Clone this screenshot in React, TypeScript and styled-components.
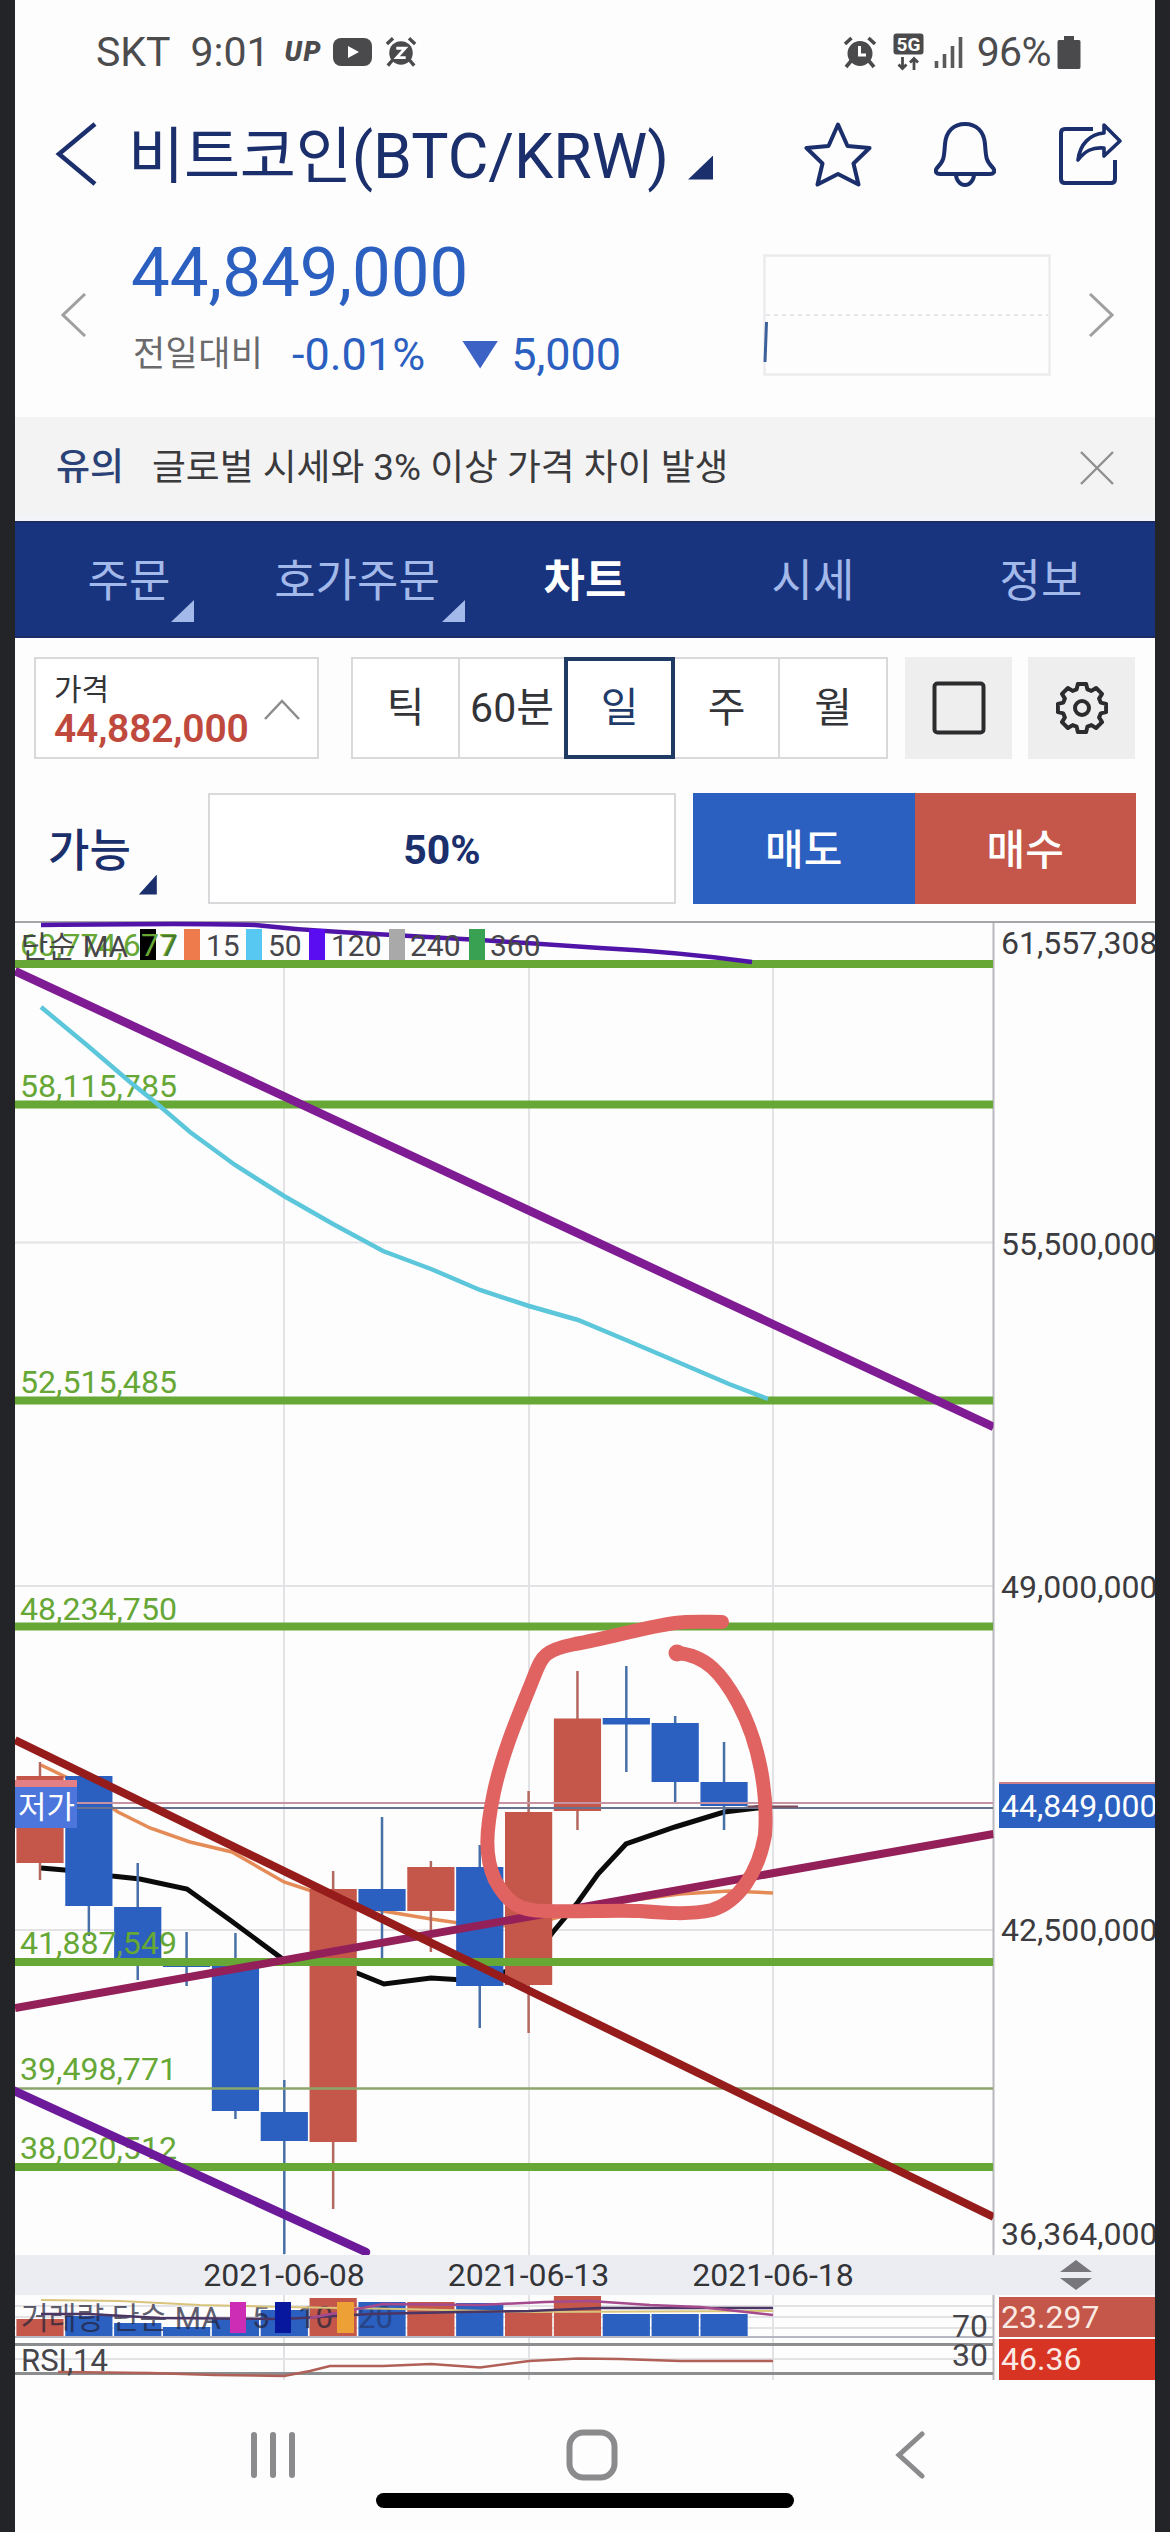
import React from "react";
import styled, { createGlobalStyle, css } from "styled-components";

const SANS = `Roboto, "Noto Sans CJK KR", sans-serif`;

const color = {
  navy: "#1a2f6b",
  nav: "#18347f",
  blue: "#2b5fc0",
  red: "#c4574a",
  ink: "#333438",
  green: "#66a736",
  line: "#d9d9dc",
};

const GlobalStyle = createGlobalStyle`
  * { box-sizing: border-box; }
  html, body { margin: 0; padding: 0; background: #222428; }
  body { font-family: ${SANS}; }
  button { font: inherit; border: 0; background: none; padding: 0; margin: 0; color: inherit; }
`;

const Screen = styled.main`
  display: flex;
  flex-direction: column;
  width: 1140px;
  height: 2532px;
  margin: 0 15px;
  background: #fdfdfd;
  overflow: hidden;
`;

const StatusBar = styled.div`
  display: flex;
  align-items: center;
  justify-content: space-between;
  height: 104px;
  padding: 0 74px 0 81px;
  color: #4c4c4e;
  font-size: 41px;
  line-height: 1;
  svg { display: block; }
`;
const StatusSide = styled.div`
  display: flex;
  align-items: center;
`;
const StatusText = styled.span<{ $gap?: number; $ls?: number }>`
  margin-right: ${(p) => p.$gap ?? 0}px;
  letter-spacing: ${(p) => p.$ls ?? 0}px;
`;
const UpMark = styled.span`
  margin-right: 11px;
  font-size: 27px;
  font-weight: 900;
  font-style: italic;
  letter-spacing: 1.5px;
`;
const Spacer = styled.i<{ $w: number }>`
  flex: none;
  width: ${(p) => p.$w}px;
`;

const TitleBar = styled.header`
  display: flex;
  align-items: center;
  height: 100px;
  padding: 0 32px 0 40px;
  color: ${color.navy};
`;
const Title = styled.h1`
  flex: 1;
  display: flex;
  align-items: flex-end;
  gap: 19px;
  margin: 5px 0 0 30px;
  font-size: 62.5px;
  font-weight: 400;
  line-height: 76px;
  white-space: nowrap;
`;
const Hangul = styled.span<{ $size: number; $ls?: number }>`
  font-size: ${(p) => p.$size}px;
  letter-spacing: ${(p) => p.$ls ?? 0}px;
`;
const Corner = styled.i<{ $w: number; $h: number; $c: string }>`
  display: block;
  flex: none;
  width: ${(p) => p.$w}px;
  height: ${(p) => p.$h}px;
  background: ${(p) => p.$c};
  clip-path: polygon(100% 0, 100% 100%, 0 100%);
`;
const TitleCorner = styled(Corner)`
  margin-bottom: 15px;
`;
const HeaderIcons = styled.div`
  display: flex;
  align-items: center;
  gap: 62px;
  svg { display: block; }
`;

const Quote = styled.section`
  display: flex;
  align-items: center;
  height: 213px;
  padding: 9px 41px 0 46px;
  svg { display: block; flex: none; }
`;
const QuoteBody = styled.div`
  flex: 1;
  margin: 0 0 15px 44px;
  color: ${color.blue};
`;
const QuotePrice = styled.div`
  font-size: 69px;
  line-height: 84px;
  letter-spacing: 0;
`;
const QuoteRow = styled.div`
  display: flex;
  align-items: center;
  height: 60px;
  margin-top: 10px;
  font-size: 45px;
  line-height: 60px;
`;
const QuoteLabel = styled.span`
  width: 161px;
  padding-left: 2px;
  color: #6a6a6c;
  font-size: 35px;
  letter-spacing: 0.4px;
`;
const DownMark = styled.i`
  width: 36px;
  height: 28px;
  margin: 0 13px 0 37px;
  background: #3c62c6;
  clip-path: polygon(0 0, 100% 0, 50% 100%);
`;

const Notice = styled.section`
  display: flex;
  align-items: center;
  height: 104px;
  padding: 4px 41px 0 41px;
  background: #f3f3f4;
  border-bottom: 6px solid #f3f3fa;
  color: #3a3a3c;
  font-size: 36.8px;
  line-height: 50px;
  white-space: nowrap;
  svg { margin-left: auto; }
`;
const NoticeTag = styled.b`
  width: 96px;
  color: #2b4276;
  font-weight: 500;
  font-size: 37px;
`;

const Tabs = styled.nav`
  display: grid;
  grid-template-columns: repeat(5, 1fr);
  height: 117px;
  background: ${color.nav};
  border-top: 2px solid #1b2c66;
  border-bottom: 2px solid #1b2c66;
`;
const Tab = styled.button<{ $on?: boolean }>`
  position: relative;
  padding-top: 4px;
  color: #a3b9ea;
  font-size: 45px;
  line-height: 109px;
  ${(p) => p.$on && css`color: #fff; font-weight: 700;`}
`;
const TabCorner = styled.span<{ $right: number }>`
  position: absolute;
  right: ${(p) => p.$right}px;
  bottom: 14px;
`;

const ToolRow = styled.section`
  display: flex;
  height: 102px;
  margin: 19px 19px 0;
`;
const PriceBox = styled.div`
  display: flex;
  align-items: center;
  justify-content: space-between;
  width: 285px;
  padding: 2px 17px 0 18px;
  border: 2px solid ${color.line};
  background: #fff;
`;
const PriceBoxText = styled.div`
  display: flex;
  flex-direction: column;
  color: ${color.ink};
  font-size: 30px;
  line-height: 40px;
  b {
    color: #c0493d;
    font-size: 39px;
    font-weight: 600;
    letter-spacing: -0.2px;
    line-height: 39px;
  }
`;
const Periods = styled.div`
  display: grid;
  grid-template-columns: 105px 106px 111px 103px 108px;
  width: 537px;
  margin: 0 17px 0 32px;
  border: 2px solid ${color.line};
  background: #fff;
`;
const Period = styled.button<{ $on?: boolean; $first?: boolean }>`
  color: ${color.ink};
  font-size: 41px;
  line-height: 98px;
  white-space: nowrap;
  border-left: ${(p) => (p.$first ? 0 : 2)}px solid ${color.line};
  ${(p) => p.$on && css`
    margin: -2px 0;
    border: 4px solid #1f3b63;
    color: #1f3b6b;
    line-height: 94px;
  `}
`;
const IconButton = styled.button`
  display: flex;
  align-items: center;
  justify-content: center;
  width: 107px;
  background: #eeeeef;
  & + & { margin-left: 16px; }
`;

const OrderRow = styled.section`
  display: flex;
  height: 111px;
  margin: 34px 19px 17px;
`;
const Available = styled.div`
  display: flex;
  align-items: center;
  width: 174px;
  padding: 6px 0 0 14px;
  color: ${color.navy};
  font-size: 45px;
  font-weight: 500;
  line-height: 60px;
  white-space: nowrap;
  i { margin: 66px 0 0 8px; }
`;
const PercentBox = styled.div`
  width: 468px;
  border: 2px solid ${color.line};
  background: #fff;
  color: ${color.navy};
  font-size: 41px;
  font-weight: 700;
  line-height: 111px;
  text-align: center;
`;
const TradeButton = styled.button<{ $sell?: boolean }>`
  flex: 1;
  margin-left: ${(p) => (p.$sell ? 17 : 0)}px;
  padding-top: 5px;
  background: ${(p) => (p.$sell ? color.blue : color.red)};
  color: #fff;
  font-size: 42px;
  font-weight: 500;
  line-height: 106px;
`;

const ChartSvg = styled.svg`
  display: block;
  flex: none;
  font-family: ${SANS};
  font-size: 32px;
`;

const DateStrip = styled.div`
  display: grid;
  grid-template-columns: 147px 244px 245px 244px 1fr;
  align-items: center;
  flex: none;
  height: 40px;
  background: #ecedf2;
  color: ${color.ink};
  font-size: 32px;
  line-height: 40px;
  text-align: center;
  svg { justify-self: center; margin-left: 101px; }
`;

const SystemNav = styled.footer`
  display: flex;
  align-items: center;
  justify-content: space-between;
  height: 110px;
  margin-top: 20px;
  padding: 0 230px 0 235px;
  flex: none;
`;
const HomeIcon = styled.svg`
  margin-right: 7px;
`;
const HomeBar = styled.div`
  align-self: center;
  width: 418px;
  height: 15px;
  margin-top: -17px;
  flex: none;
  border-radius: 8px;
  background: #000;
`;

type CandleData = { o: number; c: number; h: number; l: number; up?: boolean; v: number };

const candles: CandleData[] = [
  { o: 1776, c: 1863, h: 1762, l: 1880, up: true, v: 2319 },
  { o: 1776, c: 1906, h: 1776, l: 1936, v: 2316 },
  { o: 1907, c: 1958, h: 1863, l: 1980, v: 2323 },
  { o: 1962, c: 1967, h: 1932, l: 1986, v: 2327 },
  { o: 1962, c: 2111, h: 1933, l: 2119, v: 2318 },
  { o: 2112, c: 2141, h: 2080, l: 2254, v: 2310 },
  { o: 1889, c: 2142, h: 1871, l: 2209, up: true, v: 2298 },
  { o: 1889, c: 1911, h: 1817, l: 1960, v: 2302 },
  { o: 1867, c: 1911, h: 1861, l: 1952, up: true, v: 2302 },
  { o: 1867, c: 1986, h: 1845, l: 2028, v: 2303 },
  { o: 1812, c: 1985, h: 1791, l: 2033, up: true, v: 2310 },
  { o: 1718.5, c: 1811, h: 1671, l: 1830, up: true, v: 2296 },
  { o: 1718, c: 1724.5, h: 1666, l: 1772, v: 2314 },
  { o: 1723, c: 1782, h: 1716, l: 1803, v: 2314 },
  { o: 1782, c: 1806, h: 1742, l: 1830, v: 2314 },
];
const candleX = (i: number) => 40 + i * 48.86;

const levels = [
  { label: "60,774,677", y: 964, base: 956, w: 8 },
  { label: "58,115,785", y: 1104.5, base: 1097, w: 8 },
  { label: "52,515,485", y: 1400.5, base: 1393, w: 8 },
  { label: "48,234,750", y: 1626.5, base: 1619.5, w: 8 },
  { label: "41,887,549", y: 1962, base: 1954, w: 8 },
  { label: "39,498,771", y: 2088.5, base: 2080, w: 2.5 },
  { label: "38,020,512", y: 2167, base: 2158.5, w: 8 },
];

const legend = [
  { n: "7", sq: 140, x: 161, c: "#000" },
  { n: "15", sq: 184, x: 206, c: "#ee7b4b" },
  { n: "50", sq: 246, x: 268, c: "#56c8f2" },
  { n: "120", sq: 309, x: 331, c: "#5a0df0" },
  { n: "240", sq: 389, x: 410, c: "#a9a9aa" },
  { n: "360", sq: 469, x: 490, c: "#39a152" },
];

const axis = [
  { t: "61,557,308", y: 954 },
  { t: "55,500,000", y: 1255 },
  { t: "49,000,000", y: 1598 },
  { t: "42,500,000", y: 1941 },
  { t: "36,364,000", y: 2244.5 },
];

function PricePane() {
  return (
    <ChartSvg width="1140" height="1334" viewBox="15 921 1140 1334">
      <defs>
        <clipPath id="plot"><rect x="15" y="921" width="978.5" height="1334" /></clipPath>
      </defs>
      <rect x="15" y="921" width="1140" height="2" fill="#a6a6aa" />
      <g stroke="#e3e3e6" strokeWidth="2">
        {[284, 529, 773].map((x) => <line key={x} x1={x} x2={x} y1="968" y2="2255" />)}
        {[1242.5, 1586, 1930].map((y) => <line key={y} x1="15" x2="993" y1={y} y2={y} />)}
      </g>
      <line x1="993.5" x2="993.5" y1="923" y2="2255" stroke="#b9b9bd" strokeWidth="2" />
      <g clipPath="url(#plot)" fill="none">
        <path d="M41 1765L70 1779L118 1812L150 1828L190 1842L232 1852L284 1882L333 1898L383 1911L431 1919L480 1926L529 1925L578 1912L626 1901L680 1894L729 1891L773 1893" stroke="#e58b57" strokeWidth="3.5" />
        <path d="M41 1868L88 1872L112 1876L140 1879L187 1889L230 1920L284 1960L333 1966L357 1973L384 1984L431 1978L480 1981L529 1963L553 1932L578 1902L598 1874L626 1844L675 1827L724 1812L765 1807" stroke="#0b0b0b" strokeWidth="5" />
        {candles.map((k, i) => {
          const x = candleX(i);
          return (
            <g key={i}>
              <line x1={x} x2={x} y1={k.h} y2={k.l} stroke={k.up ? "#b4685f" : "#4870a8"} strokeWidth="2.5" />
              <rect x={x - 23.6} y={k.o} width="47.2" height={k.c - k.o} fill={k.up ? color.red : color.blue} />
            </g>
          );
        })}
        <line x1="77" x2="993" y1="1803" y2="1803" stroke="#c793a2" strokeWidth="2" />
        <line x1="77" x2="993" y1="1808" y2="1808" stroke="#66728f" strokeWidth="2" />
        <line x1="748" x2="798" y1="1806.5" y2="1806.5" stroke="#7c4a58" strokeWidth="2" />
        <rect x="140" y="929" width="16" height="31" fill="#000" />
        {levels.map((l) => (
          <g key={l.label}>
            <text x="20" y={l.base} fill={color.green} textLength="157" lengthAdjust="spacingAndGlyphs">{l.label}</text>
            <line x1="15" x2="993" y1={l.y} y2={l.y} stroke={l.w > 4 ? color.green : "#8ba66a"} strokeWidth={l.w} />
          </g>
        ))}
        <path d="M41 1007L88 1046L130 1082L155 1102L190 1132L235 1165L284 1196L333 1224L383 1251L431 1269L480 1290L529 1306L578 1320L626 1340L680 1363L729 1384L768 1399" stroke="#5cc6da" strokeWidth="4.5" />
        <path d="M41 925C120 924 200 923 255 925C290 929 320 931 340 932L480 940L600 948C660 951 700 955 752 962" stroke="#5014a8" strokeWidth="4.5" />
        <line x1="15" y1="2008" x2="993.5" y2="1834" stroke="#94205a" strokeWidth="8" />
        <line x1="15" y1="1740" x2="993.5" y2="2217" stroke="#951c1b" strokeWidth="8" />
        <line x1="15" y1="971" x2="993.5" y2="1427" stroke="#7f1b93" strokeWidth="8.5" />
        <line x1="10" y1="2089" x2="366" y2="2252" stroke="#6c1a9a" strokeWidth="8.5" strokeLinecap="round" />
      </g>
      <g fontSize="30" fill="#45454a">
        <text x="21" y="957" textLength="107" lengthAdjust="spacingAndGlyphs">단순 MA</text>
        {legend.map((m) => (
          <g key={m.n}>
            {m.n !== "7" && <rect x={m.sq} y="929" width="16" height="31" fill={m.c} />}
            <text x={m.x} y="956" fill={m.n === "7" ? "#4b7a2c" : "#45454a"}>{m.n}</text>
          </g>
        ))}
      </g>
      <path
        d="M722 1622C705 1622 690 1621 675 1623C640 1628 610 1638 575 1644C545 1650 542 1656 535 1674C520 1712 503 1750 494 1792C486 1830 484 1856 495 1880C508 1904 520 1911 545 1911C580 1912 610 1910 640 1911C665 1913 690 1915 712 1910C738 1902 758 1874 765 1835C768 1795 760 1744 738 1703C722 1674 706 1655 677 1653"
        fill="none" stroke="#e06362" strokeWidth="14" strokeLinecap="round" strokeLinejoin="round"
      />
      <circle cx="677" cy="1653" r="8.5" fill="#e06362" />
      <rect x="15" y="1780" width="62" height="7" fill="#e57f86" />
      <rect x="15" y="1787" width="62" height="41" fill="#4c76dc" />
      <text x="18" y="1818" fill="#fff" fontSize="31" textLength="57" lengthAdjust="spacingAndGlyphs">저가</text>
      <g fill="#3b3b40">
        {axis.map((a) => <text key={a.t} x="1001" y={a.y}>{a.t}</text>)}
      </g>
      <rect x="999" y="1782" width="156" height="3" fill="#c98088" />
      <rect x="999" y="1784" width="156" height="44" fill={color.blue} />
      <text x="1001" y="1817" fill="#fff">44,849,000</text>
    </ChartSvg>
  );
}

function IndicatorPane() {
  return (
    <ChartSvg width="1140" height="85" viewBox="15 2295 1140 85">
      <g stroke="#e3e3e6" strokeWidth="2">
        {[284, 529, 773].map((x) => <line key={x} x1={x} x2={x} y1="2295" y2="2380" />)}
        {[2306, 2317, 2328, 2359].map((y) => <line key={y} x1="15" x2="993" y1={y} y2={y} />)}
      </g>
      <line x1="993.5" x2="993.5" y1="2295" y2="2380" stroke="#b9b9bd" strokeWidth="2" />
      {candles.map((k, i) => (
        <rect key={i} x={candleX(i) - 23.6} y={k.v} width="47.2" height={2336.5 - k.v} fill={k.up ? color.red : color.blue} />
      ))}
      <line x1="15" x2="993" y1="2337" y2="2337" stroke="#b5b8c4" strokeWidth="2" />
      <g fontSize="31" fill="#23233a" opacity="0.72">
        <text x="21" y="2329" textLength="200" lengthAdjust="spacingAndGlyphs">거래량 단순 MA</text>
        <text x="252" y="2328">5</text>
        <text x="298" y="2328">10</text>
        <text x="358" y="2328" opacity="0.6">20</text>
      </g>
      <g fill="none">
        <path d="M41 2300L120 2301L200 2305L284 2307L400 2309L529 2312L773 2311" stroke="#d9c47c" strokeWidth="2" />
        <path d="M41 2314L88 2314L160 2318L284 2319L370 2314L460 2312L529 2311L600 2308L773 2308" stroke="#4b3563" strokeWidth="2.5" />
        <path d="M310 2318L383 2304L480 2305L545 2302L590 2301L650 2305L700 2307L773 2315" stroke="#a64a8e" strokeWidth="2.5" />
      </g>
      <rect x="230" y="2302" width="16" height="31" fill="#cd2cb4" />
      <rect x="275" y="2302" width="16" height="31" fill="#07189e" />
      <rect x="337" y="2302" width="17" height="31" fill="#eda036" />
      <line x1="15" x2="993" y1="2344.5" y2="2344.5" stroke="#8b8d8f" strokeWidth="3" />
      <line x1="15" x2="993" y1="2373.5" y2="2373.5" stroke="#8b8d8f" strokeWidth="3" />
      <path d="M58 2372L150 2373L215 2375L284 2376L310 2371L330 2366L383 2366L431 2364L480 2367.5L529 2361L578 2358.5L620 2359L680 2361L773 2361" fill="none" stroke="#b06057" strokeWidth="2.5" />
      <g fill="#45454a">
        <text x="21" y="2371" fontSize="31" textLength="87" lengthAdjust="spacingAndGlyphs">RSI,14</text>
        <text x="952" y="2337">70</text>
        <text x="952" y="2366">30</text>
      </g>
      <rect x="999" y="2297" width="156" height="40" fill={color.red} />
      <rect x="999" y="2339" width="156" height="41" fill="#d83424" />
      <g fill="#fbe9e4">
        <text x="1001" y="2328">23.297</text>
        <text x="1001" y="2370">46.36</text>
      </g>
    </ChartSvg>
  );
}

const AlarmIcon = ({ w, h, children }: { w: number; h: number; children?: React.ReactNode }) => (
  <svg width={w} height={h} viewBox="0 0 34 33">
    <circle cx="17" cy="17.5" r="12.5" fill="#4a4a4c" />
    <path d="M2 8L8.5 2M32 8L25.5 2M8 25L3 31M26 25L31 31" stroke="#4a4a4c" strokeWidth="3.6" fill="none" />
    {children}
  </svg>
);

const gearPath = (() => {
  const pts: string[] = [];
  const teeth = 8;
  for (let i = 0; i < teeth; i++) {
    const a = (i * 2 * Math.PI) / teeth - Math.PI / 2;
    [[-0.28, 19.5], [-0.17, 24.5], [0.17, 24.5], [0.28, 19.5]].forEach(([d, r]) => {
      pts.push(`${(26 + r * Math.cos(a + d)).toFixed(1)} ${(26 + r * Math.sin(a + d)).toFixed(1)}`);
    });
  }
  return `M${pts.join("L")}Z`;
})();

export default function App() {
  return (
    <>
      <GlobalStyle />
      <Screen>
        <StatusBar>
          <StatusSide>
            <StatusText $gap={20}>SKT</StatusText>
            <StatusText $gap={15}>9:01</StatusText>
            <UpMark>UP</UpMark>
            <svg width="39" height="28" viewBox="0 0 39 28">
              <rect width="39" height="28" rx="8" fill="#4a4a4c" />
              <path d="M15 8L26 14L15 20Z" fill="#fff" />
            </svg>
            <Spacer $w={13} />
            <AlarmIcon w={32} h={32}>
              <path d="M12 12.5H21.5L12.5 22.5H22" stroke="#fff" strokeWidth="3" fill="none" />
            </AlarmIcon>
          </StatusSide>
          <StatusSide>
            <AlarmIcon w={34} h={33}>
              <path d="M16.5 10V19H23" stroke="#fff" strokeWidth="3" fill="none" />
            </AlarmIcon>
            <Spacer $w={16} />
            <svg width="31" height="38" viewBox="0 0 31 38">
              <rect x="0.5" y="0.5" width="30" height="21" rx="3" fill="#4a4a4c" />
              <text x="15.5" y="17.5" textAnchor="middle" fontSize="19" fontWeight="700" fill="#fff">5G</text>
              <path d="M9.500 24V35M5.500 31.500L9.500 35.500L13.500 31.500M21 37V26M17 29.500L21 25.500L25 29.500" stroke="#4a4a4c" strokeWidth="2.8" fill="none" />
            </svg>
            <Spacer $w={10} />
            <svg width="29" height="31" viewBox="0 0 29 31">
              <path d="M2.500 24V31M10.500 17V31M18.500 9V31M26.500 0V31" stroke="#5a5a5c" strokeWidth="3.600" />
            </svg>
            <Spacer $w={14} />
            <StatusText $ls={-0.6} $gap={6}>96%</StatusText>
            <svg width="24" height="33" viewBox="0 0 24 33">
              <path d="M7 0H17V4H22Q23.500 4 23.500 6V31Q23.500 33 22 33H2Q0.500 33 0.500 31V6Q0.500 4 2 4H7Z" fill="#4a4a4c" />
            </svg>
          </StatusSide>
        </StatusBar>

        <TitleBar>
          <svg width="43" height="66" viewBox="0 0 43 66">
            <path d="M40 3L4 33L40 63" fill="none" stroke={color.navy} strokeWidth="4.500" />
          </svg>
          <Title>
            <span><Hangul $size={61} $ls={-0.2}>비트코인</Hangul>(BTC/KRW)</span>
            <TitleCorner $w={25} $h={24} $c={color.navy} />
          </Title>
          <HeaderIcons>
            <svg width="68" height="66" viewBox="0 0 68 66" fill="none" stroke={color.navy} strokeWidth="4" strokeLinejoin="round">
              <path d="M34 3.500L43.500 25L65.500 27L49.500 42.500L54.500 63.500L34 53L13.500 63.500L18.500 42.500L2.500 27L24.500 25Z" />
            </svg>
            <svg width="62" height="66" viewBox="0 0 62 66" fill="none" stroke={color.navy} strokeWidth="4" strokeLinejoin="round">
              <path d="M31 3C42 3 50 10 51 23C52 37 52 40 59 47C62 51 59 53 56 53H6C3 53 0 51 3 47C10 40 10 37 11 23C12 10 20 3 31 3Z" />
              <path d="M22 53C22 59 26 64 31 64S40 59 40 53" />
            </svg>
            <svg width="65" height="64" viewBox="0 0 65 64" fill="none" stroke={color.navy} strokeWidth="4" strokeLinejoin="round">
              <path d="M35 7H7Q3 7 3 11V57Q3 61 7 61H53Q57 61 57 57V38" />
              <path d="M46 3L62 19L46 34V26C34 25 27 29 20 38C22 22 32 12 46 11Z" strokeWidth="3.600" />
            </svg>
          </HeaderIcons>
        </TitleBar>

        <Quote>
          <svg width="26" height="44" viewBox="0 0 26 44">
            <path d="M24 1L2 22L24 43" fill="none" stroke="#a0a0a2" strokeWidth="3" />
          </svg>
          <QuoteBody>
            <QuotePrice>44,849,000</QuotePrice>
            <QuoteRow>
              <QuoteLabel>전일대비</QuoteLabel>-0.01%<DownMark />5,000
            </QuoteRow>
          </QuoteBody>
          <svg width="288" height="122" viewBox="0 0 288 122">
            <rect x="1.500" y="1.500" width="285" height="119" fill="none" stroke="#ececee" strokeWidth="2.500" />
            <path d="M3 61H285" stroke="#e6e6e9" strokeWidth="2" strokeDasharray="4 4" />
            <path d="M3.500 68L2 108" stroke="#3d6199" strokeWidth="3" />
          </svg>
          <Spacer $w={37} />
          <svg width="26" height="44" viewBox="0 0 26 44">
            <path d="M2 1L24 22L2 43" fill="none" stroke="#a0a0a2" strokeWidth="3" />
          </svg>
        </Quote>

        <Notice>
          <NoticeTag>유의</NoticeTag>글로벌 시세와 3% 이상 가격 차이 발생
          <svg width="34" height="34" viewBox="0 0 34 34">
            <path d="M1 1L33 33M33 1L1 33" stroke="#8f8f91" strokeWidth="2.400" />
          </svg>
        </Notice>

        <Tabs>
          <Tab>주문<TabCorner $right={49}><Corner $w={23} $h={22} $c="#a3b9ea" /></TabCorner></Tab>
          <Tab>호가주문<TabCorner $right={6}><Corner $w={23} $h={22} $c="#a3b9ea" /></TabCorner></Tab>
          <Tab $on>차트</Tab>
          <Tab>시세</Tab>
          <Tab>정보</Tab>
        </Tabs>

        <ToolRow>
          <PriceBox>
            <PriceBoxText>가격<b>44,882,000</b></PriceBoxText>
            <svg width="36" height="21" viewBox="0 0 36 21">
              <path d="M1 20L18 2L35 20" fill="none" stroke="#8c8c8e" strokeWidth="2.500" />
            </svg>
          </PriceBox>
          <Periods>
            <Period $first>틱</Period>
            <Period>60분</Period>
            <Period $on>일</Period>
            <Period $first>주</Period>
            <Period>월</Period>
          </Periods>
          <IconButton>
            <svg width="54" height="54" viewBox="0 0 54 54">
              <rect x="2.500" y="2.500" width="49" height="49" rx="3" fill="none" stroke="#2c2c2e" strokeWidth="4" />
            </svg>
          </IconButton>
          <IconButton>
            <svg width="52" height="52" viewBox="0 0 52 52" fill="none" stroke="#2c2c2e" strokeWidth="4" strokeLinejoin="round">
              <path d={gearPath} />
              <circle cx="26" cy="26" r="7" />
            </svg>
          </IconButton>
        </ToolRow>

        <OrderRow>
          <Available>가능<Corner $w={18} $h={20} $c={color.navy} /></Available>
          <PercentBox>50%</PercentBox>
          <TradeButton $sell>매도</TradeButton>
          <TradeButton>매수</TradeButton>
        </OrderRow>

        <PricePane />
        <DateStrip>
          <span />
          <span>2021-06-08</span>
          <span>2021-06-13</span>
          <span>2021-06-18</span>
          <svg width="32" height="30" viewBox="0 0 32 30">
            <path d="M16 0L32 12H0ZM0 18H32L16 30Z" fill="#77777b" />
          </svg>
        </DateStrip>
        <IndicatorPane />

        <SystemNav>
          <svg width="46" height="50" viewBox="0 0 46 50">
            <path d="M4 5V45M23 5V45M42 5V45" stroke="#8b8b8d" strokeWidth="6" strokeLinecap="round" />
          </svg>
          <HomeIcon width="52" height="52" viewBox="0 0 52 52">
            <rect x="3.500" y="3.500" width="45" height="45" rx="14" fill="none" stroke="#8b8b8d" strokeWidth="6" />
          </HomeIcon>
          <svg width="30" height="48" viewBox="0 0 30 48">
            <path d="M27 3L4 24L27 45" fill="none" stroke="#8b8b8d" strokeWidth="5" strokeLinecap="round" />
          </svg>
        </SystemNav>
        <HomeBar />
      </Screen>
    </>
  );
}
